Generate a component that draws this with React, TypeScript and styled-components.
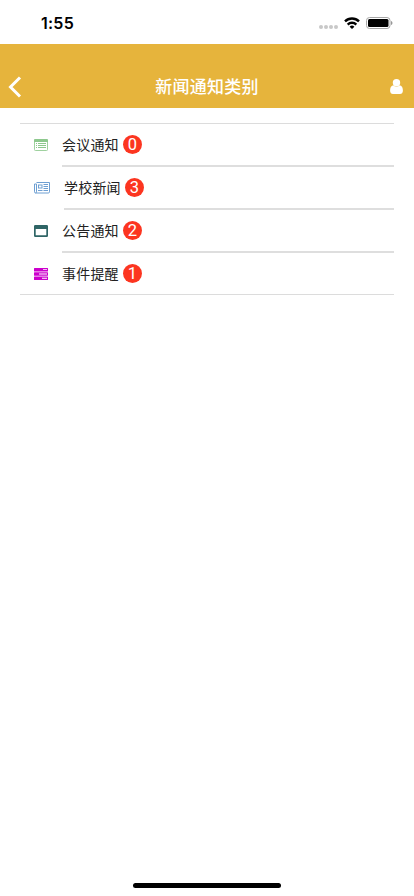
import React from 'react';
import styled, { createGlobalStyle } from 'styled-components';

const GlobalStyle = createGlobalStyle`
  * { box-sizing: border-box; }
  html, body { margin: 0; padding: 0; background: #fff; }
  body { font-family: "Noto Sans CJK SC", sans-serif; overflow: hidden; }
  svg { display: block; flex: none; }
`;

const Screen = styled.div`
  width: 100%;
  height: 100vh;
  display: flex;
  flex-direction: column;
  background: #fff;
`;

const StatusBar = styled.div`
  height: 44px;
  flex: none;
  display: flex;
  align-items: center;
  justify-content: space-between;
  padding: 2px 21px 0 41px;
`;

const Clock = styled.span`
  font: 600 16px/20px Inter, sans-serif;
  letter-spacing: 0.25px;
  color: #000;
`;

const Indicators = styled.div`
  display: flex;
  align-items: center;
`;

const Signal = styled.div`
  display: flex;
  gap: 1px;
  margin: 7px 6px 0 0;
`;

const Dot = styled.i`
  width: 4px;
  height: 4px;
  border-radius: 50%;
  background: #c8c8c8;
`;

const BatterySlot = styled.span`
  margin-left: 6px;
`;

const Header = styled.header`
  height: 64px;
  flex: none;
  padding: 20px 11px 0 8px;
  display: grid;
  grid-template-columns: 40px 1fr 37px;
  align-items: center;
  background: #e6b43c;
  color: #fff;
`;

const Title = styled.h1`
  margin: 0;
  padding-bottom: 1px;
  font-size: 17px;
  line-height: 24px;
  font-weight: 500;
  letter-spacing: 0.25px;
  text-align: center;
  white-space: nowrap;
`;

const IconButton = styled.button<{ $end?: boolean }>`
  display: flex;
  justify-content: ${p => (p.$end ? 'flex-end' : 'flex-start')};
  padding: ${p => (p.$end ? '0' : '2px 0 0')};
  border: 0;
  background: none;
  color: inherit;
`;

const List = styled.ul`
  list-style: none;
  margin: 15px 20px 0;
  padding: 0;
  border-top: 1px solid #dcdcdc;
  border-bottom: 1px solid #dcdcdc;
`;

const Row = styled.li`
  display: flex;
  height: 43px;
  padding-left: 14px;

  &:last-child { height: 41px; }
`;

const IconCell = styled.span<{ $wide?: boolean }>`
  width: ${p => (p.$wide ? 30 : 28)}px;
  height: 42px;
  display: flex;
  align-items: center;
`;

const RowBody = styled.div`
  flex: 1;
  display: flex;
  align-items: center;
  gap: 4px;
  height: 43px;
  border-bottom: 2px solid #dedede;

  ${Row}:last-child & { height: 41px; border-bottom: 0; }
`;

const Label = styled.span`
  padding-bottom: 2px;
  font-size: 14px;
  line-height: 20px;
  letter-spacing: 0.2px;
  color: #222;
`;

const Badge = styled.span`
  width: 19px;
  height: 19px;
  border-radius: 50%;
  background: #fc3520;
  color: #fff;
  font: 400 16.5px/19px Roboto, sans-serif;
  text-align: center;
`;

const HomeArea = styled.div`
  margin-top: auto;
  display: flex;
  justify-content: center;
  padding-bottom: 8px;
`;

const HomeIndicator = styled.div`
  width: 148px;
  height: 5px;
  border-radius: 3px;
  background: #000;
`;

const WifiIcon = () => (
  <svg width="16" height="12" viewBox="0 0 16 12" fill="none" stroke="#000" strokeWidth="2.4">
    <path d="M1 4.400a10 10 0 0 1 14 0" />
    <path d="M3.700 7.600a6 6 0 0 1 8.600 0" />
    <path d="M8 12 5.600 9.700a3.400 3.400 0 0 1 4.800 0z" fill="#000" stroke="none" />
  </svg>
);

const BatteryIcon = () => (
  <svg width="27" height="12" viewBox="0 0 27 12">
    <rect x=".5" y=".5" width="23.5" height="11" rx="3" fill="none" stroke="#a6a6a6" />
    <rect x="2" y="2" width="20.5" height="8" rx="1.5" />
    <path d="M25.1 4v4c.8-.3 1.3-1.1 1.3-2s-.5-1.7-1.3-2z" fill="#888" />
  </svg>
);

const BackIcon = () => (
  <svg width="14" height="22" viewBox="0 0 14 22" fill="none" stroke="#fff" strokeWidth="3">
    <path d="M12 1.5 2.500 11l9.500 9.500" />
  </svg>
);

const UserIcon = () => (
  <svg width="13" height="15" viewBox="0 0 13 15" fill="#fff">
    <circle cx="6.500" cy="3.800" r="3.700" />
    <path d="M3.200 6.300C1 6.700.1 9 .1 11.700.1 13.700 1.300 15 3 15h7c1.700 0 2.900-1.300 2.900-3.300 0-2.700-.9-5-3.100-5.400A4.800 4.800 0 0 1 6.500 7.700a4.800 4.800 0 0 1-3.300-1.400z" />
  </svg>
);

const ListIcon = () => (
  <svg width="14" height="12" viewBox="0 0 14 12">
    <rect x=".5" y=".5" width="13" height="11" rx=".8" fill="#fff" stroke="#9fd19f" />
    <path d="M0 1.200Q0 0 1.200 0h11.600Q14 0 14 1.200V3H0z" fill="#8dc88d" />
    <path d="M2 4.500h1M4 4.500h8M2 6.500h1M4 6.500h8M2 8.500h1M4 8.500h8" stroke="#8dc88d" />
  </svg>
);

const NewsIcon = () => (
  <svg width="16" height="12" viewBox="0 0 16 12" fill="none" stroke="#6e9fd2">
    <path d="M2.500.5h13v9.300q0 1.200-1.200 1.200H1.700Q.5 11 .5 9.800V2h2v7.800q0 1.200-1 1.200" />
    <rect x="4.500" y="3" width="3.500" height="3" />
    <path d="M4 8.500h4.500M9.500 2.500H14M9.500 4.500H14M9.500 6.500H14M9.500 8.500H14" />
  </svg>
);

const WindowIcon = () => (
  <svg width="14" height="12" viewBox="0 0 14 12">
    <path fill="#2f6566" fillRule="evenodd" d="M1.200 0h11.600Q14 0 14 1.200v9.600q0 1.200-1.200 1.200H1.200Q0 12 0 10.800V1.200Q0 0 1.200 0zM1.700 4v6.300h10.600V4z" />
  </svg>
);

const TasksIcon = () => (
  <svg width="14" height="12" viewBox="0 0 14 12">
    <path fill="#cc00cc" fillRule="evenodd" d="M.5 0h13q.5 0 .5.500v2.400q0 .5-.5.500H.5q-.5 0-.5-.5V.5Q0 0 .5 0zM9 1.200v.9h4v-.9zM.5 4.300h13q.5 0 .5.500v2.400q0 .5-.5.500H.5q-.5 0-.5-.5V4.800q0-.5.5-.5zM5 5.500v.9h8v-.9zM.5 8.600h13q.5 0 .5.500v2.400q0 .5-.5.500H.5q-.5 0-.5-.5V9.100q0-.5.5-.5zM8 9.800v.9h5v-.9z" />
  </svg>
);

const categories = [
  { name: '会议通知', count: 0, Icon: ListIcon },
  { name: '学校新闻', count: 3, Icon: NewsIcon, wide: true },
  { name: '公告通知', count: 2, Icon: WindowIcon },
  { name: '事件提醒', count: 1, Icon: TasksIcon },
];

export default function App() {
  return (
    <Screen>
      <GlobalStyle />
      <StatusBar>
        <Clock>1:55</Clock>
        <Indicators>
          <Signal><Dot /><Dot /><Dot /><Dot /></Signal>
          <WifiIcon />
          <BatterySlot><BatteryIcon /></BatterySlot>
        </Indicators>
      </StatusBar>
      <Header>
        <IconButton aria-label="返回"><BackIcon /></IconButton>
        <Title>新闻通知类别</Title>
        <IconButton $end aria-label="用户"><UserIcon /></IconButton>
      </Header>
      <List>
        {categories.map(({ name, count, Icon, wide }) => (
          <Row key={name}>
            <IconCell $wide={wide}><Icon /></IconCell>
            <RowBody>
              <Label>{name}</Label>
              <Badge>{count}</Badge>
            </RowBody>
          </Row>
        ))}
      </List>
      <HomeArea><HomeIndicator /></HomeArea>
    </Screen>
  );
}
